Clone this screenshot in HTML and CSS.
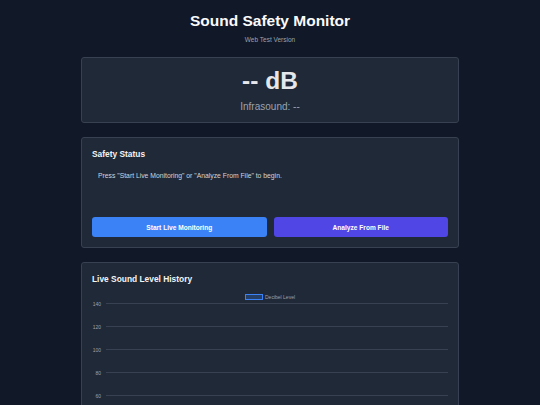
FILE: index.html
```html
<!DOCTYPE html>
<html>
<head>
<meta charset="utf-8">
<link rel="stylesheet" href="styles.css">
</head>
<body>
<div class="container">
  <header class="header">
    <h1 class="title">Sound Safety Monitor</h1>
    <p class="subtitle">Web Test Version</p>
  </header>

  <section class="card reading">
    <div class="db">-- dB</div>
    <div class="infra">Infrasound: --</div>
  </section>

  <section class="card status">
    <h2 class="card-title">Safety Status</h2>
    <div class="status-box">Press "Start Live Monitoring" or "Analyze From File" to begin.</div>
    <div class="buttons">
      <button class="btn btn-blue">Start Live Monitoring</button>
      <button class="btn btn-indigo">Analyze From File</button>
    </div>
  </section>

  <section class="card history">
    <h2 class="card-title">Live Sound Level History</h2>
    <svg class="chart" width="356" height="125" viewBox="0 0 356 125">
      <rect x="153.5" y="6.5" width="17" height="5" fill="rgba(59,130,246,0.25)" stroke="#3b82f6" stroke-width="1"/>
      <text x="173" y="11" class="legend">Decibel Level</text>
      <g class="grid">
        <line x1="14" y1="15.5" x2="356" y2="15.5"/>
        <line x1="14" y1="38.5" x2="356" y2="38.5"/>
        <line x1="14" y1="61.5" x2="356" y2="61.5"/>
        <line x1="14" y1="84.5" x2="356" y2="84.5"/>
        <line x1="14" y1="107.5" x2="356" y2="107.5"/>
      </g>
      <g class="labels">
        <text x="9" y="17.5">140</text>
        <text x="9" y="40.5">120</text>
        <text x="9" y="63.5">100</text>
        <text x="9" y="86.5">80</text>
        <text x="9" y="109.5">60</text>
      </g>
    </svg>
  </section>
</div>
</body>
</html>
```

FILE: styles.css
```css
* { box-sizing: border-box; }
html, body {
  margin: 0;
  padding: 0;
  background: #111827;
  font-family: "Liberation Sans", Arial, sans-serif;
  color: #e5e7eb;
}
.container {
  width: 378px;
  margin: 0 auto;
  padding-top: 12px;
  display: flex;
  flex-direction: column;
}
.header {
  text-align: center;
  margin-bottom: 13px;
}
.title {
  margin: 0;
  font-size: 15.5px;
  line-height: 18px;
  font-weight: bold;
  color: #f9fafb;
}
.subtitle {
  margin: 6px 0 0;
  font-size: 6.5px;
  line-height: 8px;
  color: #9ca3af;
}
.card {
  background: #1f2937;
  border: 1px solid #374151;
  border-radius: 3px;
  padding: 10px 10px;
  margin-bottom: 14px;
}
.reading {
  text-align: center;
  padding: 10px 10px 8px;
}
.db {
  font-size: 24.5px;
  line-height: 25px;
  font-weight: bold;
  color: #e5e7eb;
}
.infra {
  margin-top: 7px;
  font-size: 10px;
  line-height: 14px;
  color: #9ca3af;
}
.card-title {
  margin: 0;
  font-size: 8.4px;
  line-height: 12px;
  font-weight: bold;
  color: #f3f4f6;
}
.status-box {
  margin-top: 6px;
  padding: 6px 6px;
  min-height: 45px;
  font-size: 6.8px;
  line-height: 8px;
  color: #d1d5db;
}
.buttons {
  margin-top: 6px;
  display: grid;
  grid-template-columns: 1fr 1fr;
  gap: 7px;
}
.btn {
  height: 20px;
  border: none;
  border-radius: 3px;
  color: #ffffff;
  font-family: "Liberation Sans", Arial, sans-serif;
  font-weight: bold;
  font-size: 6.6px;
  padding: 0;
}
.btn-blue { background: #3b82f6; }
.btn-indigo { background: #4f46e5; }
.history { padding-bottom: 0; margin-bottom: 0; }
.chart {
  display: block;
  margin-top: 3px;
}
.legend {
  font-size: 5px;
  fill: #9ca3af;
  font-family: "Liberation Sans", Arial, sans-serif;
}
.grid line {
  stroke: #374151;
  stroke-width: 1;
}
.labels text {
  font-size: 5px;
  fill: #9ca3af;
  text-anchor: end;
  font-family: "Liberation Sans", Arial, sans-serif;
}
```
